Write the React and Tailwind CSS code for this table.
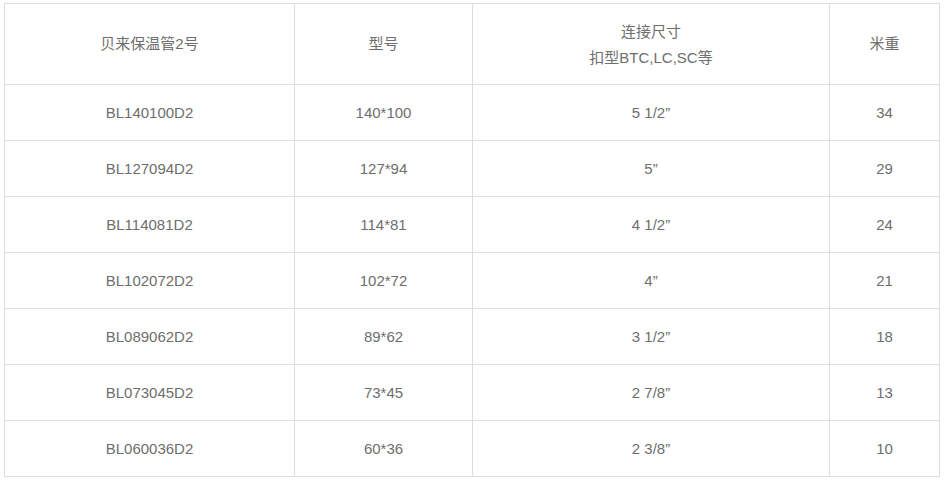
import React from "react";

const rows = [
  ["BL140100D2", "140*100", "5 1/2\u201d", "34"],
  ["BL127094D2", "127*94", "5\u201d", "29"],
  ["BL114081D2", "114*81", "4 1/2\u201d", "24"],
  ["BL102072D2", "102*72", "4\u201d", "21"],
  ["BL089062D2", "89*62", "3 1/2\u201d", "18"],
  ["BL073045D2", "73*45", "2 7/8\u201d", "13"],
  ["BL060036D2", "60*36", "2 3/8\u201d", "10"],
];

export default function App() {
  const cell = "flex items-center justify-center text-center border-r border-b border-[#dddddd]";
  return (
    <div className="w-[945px] h-[483px] bg-white pt-[3px] pl-[4px]" style={{ fontFamily: '"Liberation Sans", "Noto Sans CJK SC", sans-serif' }}>
      <div className="grid grid-cols-[290px_178px_357px_110px] w-[936px] border-l border-t border-[#dddddd] text-[15px] text-[#6e6e6e]">
        <div className={`${cell} h-[81px]`}>贝来保温管2号</div>
        <div className={`${cell} h-[81px]`}>型号</div>
        <div className={`${cell} h-[81px] flex-col leading-[26px] pt-px`}>
          <div>连接尺寸</div>
          <div>扣型BTC,LC,SC等</div>
        </div>
        <div className={`${cell} h-[81px]`}>米重</div>
        {rows.map((r, i) => (
          <React.Fragment key={i}>
            {r.map((v, j) => (
              <div key={j} className={`${cell} h-[56px] pt-[2px]`}>{v}</div>
            ))}
          </React.Fragment>
        ))}
      </div>
    </div>
  );
}
